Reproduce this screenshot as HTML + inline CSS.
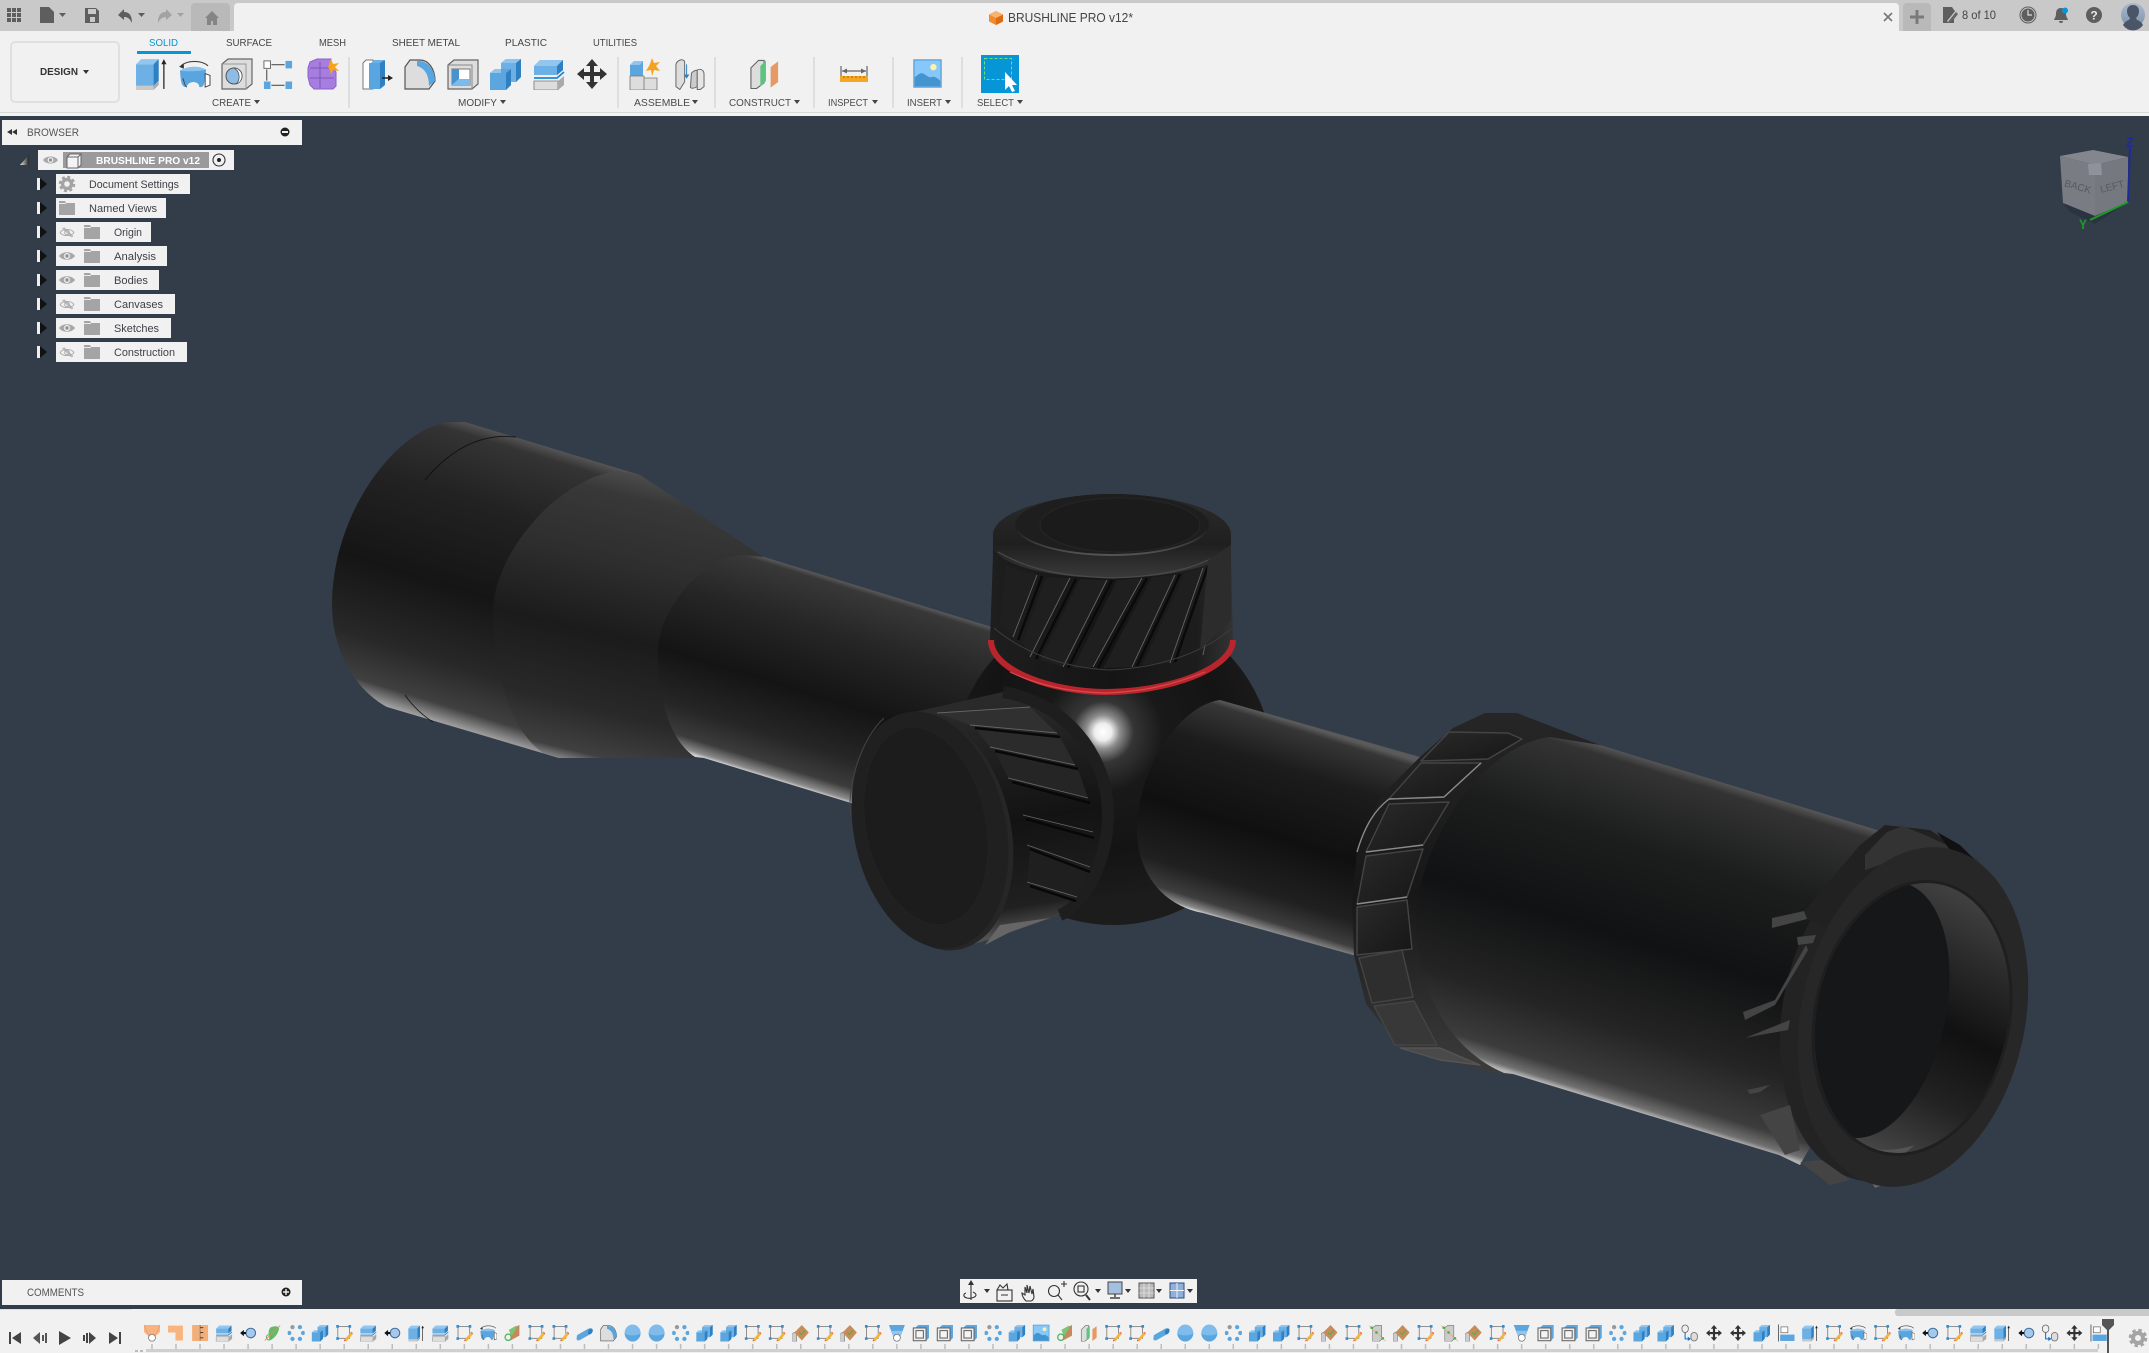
<!DOCTYPE html>
<html><head><meta charset="utf-8"><title>BRUSHLINE PRO v12</title>
<style>
html,body{margin:0;padding:0;background:#333d4a;width:2149px;height:1353px;overflow:hidden}
svg{display:block}
text{font-family:"Liberation Sans",sans-serif}
</style></head><body>
<svg xmlns="http://www.w3.org/2000/svg" width="2149" height="1353" viewBox="0 0 2149 1353">
<defs>
<linearGradient id="tA" gradientUnits="userSpaceOnUse" x1="800" y1="568" x2="738" y2="768.5">
<stop offset="0" stop-color="#5a5a5a"/><stop offset=".025" stop-color="#383838"/><stop offset=".25" stop-color="#262626"/><stop offset=".56" stop-color="#141414"/><stop offset=".8" stop-color="#262626"/><stop offset=".93" stop-color="#3c3c3c"/><stop offset=".985" stop-color="#8c8c8c"/><stop offset="1" stop-color="#cfcfcf"/></linearGradient>
<linearGradient id="tB" gradientUnits="userSpaceOnUse" x1="620" y1="470" x2="550" y2="760">
<stop offset="0" stop-color="#4c4c4c"/><stop offset=".08" stop-color="#383838"/><stop offset=".3" stop-color="#2e2e2e"/><stop offset=".55" stop-color="#1b1b1b"/><stop offset=".8" stop-color="#292929"/><stop offset=".95" stop-color="#404040"/><stop offset="1" stop-color="#a0a0a0"/></linearGradient>
<linearGradient id="tC" gradientUnits="userSpaceOnUse" x1="500" y1="432" x2="413" y2="714">
<stop offset="0" stop-color="#555"/><stop offset=".04" stop-color="#343434"/><stop offset=".25" stop-color="#222"/><stop offset=".55" stop-color="#151515"/><stop offset=".8" stop-color="#282828"/><stop offset=".94" stop-color="#404040"/><stop offset="1" stop-color="#a0a0a0"/></linearGradient>
<linearGradient id="tR" gradientUnits="userSpaceOnUse" x1="1300" y1="724.6" x2="1238" y2="924.6">
<stop offset="0" stop-color="#5a5a5a"/><stop offset=".03" stop-color="#363636"/><stop offset=".22" stop-color="#1c1c1c"/><stop offset=".55" stop-color="#101010"/><stop offset=".82" stop-color="#202020"/><stop offset=".94" stop-color="#3e3e3e"/><stop offset=".985" stop-color="#8a8a8a"/><stop offset="1" stop-color="#ddd"/></linearGradient>
<linearGradient id="tM" gradientUnits="userSpaceOnUse" x1="1700" y1="775" x2="1599" y2="1100">
<stop offset="0" stop-color="#585858"/><stop offset=".03" stop-color="#333"/><stop offset=".25" stop-color="#1c1d1d"/><stop offset=".52" stop-color="#111213"/><stop offset=".78" stop-color="#242424"/><stop offset=".94" stop-color="#3c3c3c"/><stop offset=".985" stop-color="#707070"/><stop offset="1" stop-color="#b4b4b4"/></linearGradient>
<linearGradient id="tI" gradientUnits="userSpaceOnUse" x1="1960" y1="880" x2="1890" y2="1150">
<stop offset="0" stop-color="#454545"/><stop offset=".25" stop-color="#2a2a2a"/><stop offset=".5" stop-color="#111"/><stop offset=".75" stop-color="#222"/><stop offset="1" stop-color="#444"/></linearGradient>
<radialGradient id="sph" gradientUnits="userSpaceOnUse" cx="1103" cy="732" r="170">
<stop offset="0" stop-color="#fff"/><stop offset=".05" stop-color="#eee"/><stop offset=".1" stop-color="#8c8c8c"/><stop offset=".18" stop-color="#353535"/><stop offset=".35" stop-color="#191919"/><stop offset=".7" stop-color="#141414"/><stop offset="1" stop-color="#1c1c1c"/></radialGradient>
<linearGradient id="kn" x1="0" y1="0" x2="1" y2="0"><stop offset="0" stop-color="#1e1e1e"/><stop offset=".5" stop-color="#151515"/><stop offset=".85" stop-color="#1d1d1d"/><stop offset="1" stop-color="#333"/></linearGradient>
<linearGradient id="capT" x1="0" y1="0" x2="0" y2="1"><stop offset="0" stop-color="#2c2c2c"/><stop offset=".6" stop-color="#1f1f1f"/><stop offset="1" stop-color="#3a3a3a"/></linearGradient>
<linearGradient id="capI" x1="0" y1="0" x2="0" y2="1"><stop offset="0" stop-color="#232323"/><stop offset=".55" stop-color="#1d1d1d"/><stop offset="1" stop-color="#555"/></linearGradient>
<linearGradient id="wnd" gradientUnits="userSpaceOnUse" x1="1000" y1="700" x2="1040" y2="940"><stop offset="0" stop-color="#2a2a2a"/><stop offset=".5" stop-color="#131313"/><stop offset=".85" stop-color="#202020"/><stop offset="1" stop-color="#666"/></linearGradient>
<linearGradient id="ring" x1="0" y1="0" x2="0" y2="1"><stop offset="0" stop-color="#262626"/><stop offset=".5" stop-color="#171717"/><stop offset="1" stop-color="#3c3c3c"/></linearGradient>
<linearGradient id="cell" x1="0" y1="0" x2="1" y2="1"><stop offset="0" stop-color="#2a2a2a"/><stop offset="1" stop-color="#161616"/></linearGradient>
<linearGradient id="tri" x1="0" y1="0" x2="1" y2="0"><stop offset="0" stop-color="#eee"/><stop offset="1" stop-color="#222"/></linearGradient>
<linearGradient id="avt" x1="0" y1="0" x2="0" y2="1"><stop offset="0" stop-color="#aab8cc"/><stop offset="1" stop-color="#7f93ad"/></linearGradient>
<clipPath id="inClip"><ellipse cx="1912" cy="1018" rx="95" ry="137" transform="rotate(12 1912 1018)"/></clipPath>

<symbol id="E" viewBox="0 0 32 32"><path d="M1 7h17v21H1z" fill="#6cb0e6"/><path d="M1 7l5-5h17l-5 5z" fill="#92c6ef"/><path d="M18 7l5-5v21l-5 5z" fill="#2f80c2"/><path d="M1 28h17v4H1z" fill="#c9c9c9"/><path d="M18 28l5-5v4l-5 5z" fill="#aaa"/><path d="M28 31V6" stroke="#222" stroke-width="1.2"/><path d="M25.5 7L28 2l2.500 5z" fill="#222"/></symbol>
<symbol id="R" viewBox="0 0 32 32"><path d="M2 7C9 1 23 1 30 7" fill="none" stroke="#444" stroke-width="1.200"/><path d="M0 8l5-3 0 5z" fill="#333"/><path d="M1 12C9 7 21 7 28 11L27 18C26 28 25 29 21 29C21 22 9 22 8 29C3 29 2 26 1 12Z" fill="#59a5df"/><path d="M1 12C9 7 21 7 28 11C21 13 9 13 1 12Z" fill="#8ac2ee"/><path d="M4 20c2 5 2 8 4 9M27 15l5 2v10l-5 2z" fill="#fff" stroke="#444"/></symbol>
<symbol id="H1" viewBox="0 0 32 32"><path d="M1 6l6-5h24v25l-6 5H1z" fill="#ddd" stroke="#666" stroke-width="1.200"/><path d="M1 6h24v25" fill="none" stroke="#999"/><circle cx="13" cy="18" r="8" fill="#8dbde6" stroke="#555"/><path d="M13 10a8 8 0 0 1 8 8a8 8 0 0 1-6 8a10 10 0 0 0-2-16z" fill="#fff" stroke="#555" stroke-width=".8"/></symbol>
<symbol id="SP" viewBox="0 0 32 32"><rect x="1" y="2" width="7" height="8" fill="#fff" stroke="#666"/><path d="M24 2h7v8h-7zM1 24h7v8H1zM24 24h7v8h-7z" fill="#5ba6df"/><path d="M9 6h14M4 11v12M9 28h14" stroke="#555" stroke-width="1.200"/></symbol>
<symbol id="FORM" viewBox="0 0 32 32"><path d="M3 4L10 1h14v6l5 7v14l-3 3H7l-4-4-2-8V10z" fill="#a77ee0" stroke="#8a5fcf"/><path d="M3 10h22M13 4v26M3 20h24" stroke="#7d56bb" fill="none"/><path d="M21 9l3-8 2 5 6-1-4 4 4 4-6-1-2 5-1-5z" fill="#f6a21c"/></symbol>
<symbol id="PP" viewBox="0 0 32 32"><path d="M1 5l3-3h7v29H1z" fill="#fff" stroke="#777"/><path d="M9 5l3-3h10v23H9z" fill="#6cb0e6"/><path d="M7 31V5h11l0 26z" fill="#59a5df"/><path d="M18 5l5-3v25l-5 4z" fill="#2f80c2"/><path d="M20 20h8" stroke="#222" stroke-width="1.500"/><path d="M26 17l5 3-5 3z" fill="#222"/></symbol>
<symbol id="F" viewBox="0 0 32 32"><path d="M1 31V9L6 2h10c8 0 15 8 15 21l-6 8z" fill="#ddd" stroke="#555" stroke-width="1.200"/><path d="M13 3c8-1 18 6 18 20l-6 5C25 16 20 10 13 8z" fill="#59a5df"/></symbol>
<symbol id="CH" viewBox="0 0 32 32"><path d="M1 7l6-5h24v24l-6 5H1z" fill="#ddd" stroke="#666" stroke-width="1.200"/><path d="M1 7h24v24" fill="none" stroke="#888"/><path d="M5 11h18v16H5z" fill="#fff" stroke="#777"/><path d="M5 11h7v10l-7 6z" fill="#4a92cc"/><path d="M5 27l7-6h11v6z" fill="#7bbbec"/></symbol>
<symbol id="C" viewBox="0 0 32 32"><path d="M11 5l5-4h15v18l-5 5H11z" fill="#6cb0e6"/><path d="M11 5l5-4h15l-5 4z" fill="#8fc5ef"/><path d="M26 5l5-4v18l-5 5z" fill="#2f80c2"/><path d="M0 15l5-4h16v16l-5 5H0z" fill="#5ba6df"/><path d="M0 15l5-4h6v4z" fill="#8fc5ef"/><path d="M16 15l5-4v16l-5 5z" fill="#2f80c2"/></symbol>
<symbol id="P" viewBox="0 0 32 32"><path d="M1 8l6-6h23v10l-6 5H1z" fill="#6cb0e6"/><path d="M1 8l6-6h23l-6 6z" fill="#92c6ef"/><path d="M24 8l6-6v10l-6 5z" fill="#2f80c2"/><path d="M1 20h23l7-6" fill="none" stroke="#1e88d8" stroke-width="1.800"/><path d="M1 23h24v9H1z" fill="#ddd" stroke="#777" stroke-width=".8"/><path d="M25 23l6-5v9l-6 5z" fill="#aaa"/></symbol>
<symbol id="M" viewBox="0 0 32 32"><path d="M16 1l6 7h-4v6h6v-4l7 6-7 6v-4h-6v6h4l-6 7-6-7h4v-6H8v4l-7-6 7-6v4h6V8h-4z" fill="#333"/></symbol>
<symbol id="ASM" viewBox="0 0 32 32"><path d="M1 7l4-4h9v15H1z" fill="#5ba6df"/><path d="M1 7l4-4h9l-3 4z" fill="#8fc5ef"/><path d="M1 18h14v14H1zM15 20h13v12H15z" fill="#ddd" stroke="#777" stroke-width=".8"/><path d="M21 6l2-6 2 5 6-1-4 4 4 5-6-1-2 6-1-6-5 1 3-5z" fill="#f6a21c"/></symbol>
<symbol id="JT" viewBox="0 0 32 32"><path d="M2 29V7c0-4 5-7 8-5l1 1v21l-5 8z" fill="#ddd" stroke="#666"/><path d="M18 15c2-2 4-3 6-3v17c-3 2-6 2-7 1z" fill="#ccc" stroke="#666"/><path d="M24 12c3-2 7 0 7 4v13l-4 3h-3z" fill="#e5e5e5" stroke="#666"/><path d="M13 6v14M13 20l-2-3h4z" stroke="#2f80c2" fill="#2f80c2"/></symbol>
<symbol id="N" viewBox="0 0 32 32"><path d="M1 10L9 2h6v24l-8 6H1z" fill="#ddd" stroke="#666" stroke-width="1.200"/><path d="M11 8l6-6v22l-6 6z" fill="#5ec282"/><path d="M22 9l8-6v22l-8 6z" fill="#e59a66"/></symbol>
<symbol id="K" viewBox="0 0 32 32"><path d="M12 9l17-8v20l-17 9z" fill="#c68a5a"/><path d="M9 10l14-8v6l-9 14z" fill="#7cc47a"/><circle cx="8" cy="24" r="6" fill="none" stroke="#57b665" stroke-width="2.500"/></symbol>
<symbol id="INS" viewBox="0 0 32 32"><rect x="1" y="1" width="30" height="30" fill="#86c8fa" stroke="#4d93cd" stroke-width="1.200"/><circle cx="22.500" cy="9" r="3.500" fill="#fff2a8"/><path d="M2 30V20c4-3 6-5 9-4s6 5 9 4 6 0 10 4v6z" fill="#4495cf"/></symbol>
<symbol id="S" viewBox="0 0 32 32"><rect x="4" y="4" width="22" height="22" fill="none" stroke="#777" stroke-width="1.500"/><path d="M1 1h5v5H1zM24 1h5v5h-5zM1 24h5v5H1z" fill="#2d8fd8"/><path d="M16 29l12-14 4 3-12 14z" fill="#f3b43b"/><path d="M16 32l0-4 3 2z" fill="#f04040"/><path d="M28 15l4 3 0-2-3-2z" fill="#e33"/></symbol>
<symbol id="J" viewBox="0 0 32 32"><circle cx="21" cy="16" r="9" fill="#a8c8e8" stroke="#3b6ea5" stroke-width="2"/><path d="M12 16H6" stroke="#111" stroke-width="4"/><path d="M1 16l7-6v12z" fill="#111"/></symbol>
<symbol id="G" viewBox="0 0 32 32"><path d="M12 6C22 1 28 4 29 7 28 16 20 28 10 30 12 22 6 16 12 6z" fill="#62ba6c"/><circle cx="10" cy="24" r="5" fill="none" stroke="#5cb565" stroke-width="2"/><path d="M2 30L31 2" stroke="#ea8a55" stroke-width="1.500"/></symbol>
<symbol id="D" viewBox="0 0 32 32"><circle cx="9" cy="5" r="4" fill="#999"/><circle cx="23" cy="5" r="4" fill="#5ba6df"/><circle cx="3" cy="16" r="4" fill="#5ba6df"/><circle cx="29" cy="16" r="4" fill="#5ba6df"/><circle cx="9" cy="27" r="4" fill="#5ba6df"/><circle cx="23" cy="27" r="4" fill="#5ba6df"/></symbol>
<symbol id="Y" viewBox="0 0 32 32"><path d="M2 20L23 8c4-2 7-1 8 2 1 3-1 6-4 8L8 29c-4 2-7 1-7-3z" fill="#5ba6df"/><ellipse cx="27" cy="13" rx="4" ry="6" fill="#2f80c2" transform="rotate(30 27 13)"/></symbol>
<symbol id="B" viewBox="0 0 32 32"><ellipse cx="16" cy="16" rx="15" ry="16" fill="#7fbcec"/><path d="M1 16c4 6 26 6 30 0a15 16 0 0 1-30 0z" fill="#5ba6df"/></symbol>
<symbol id="V" viewBox="0 0 32 32"><path d="M0 32V17l8-4v19z" fill="#ccc" stroke="#666"/><path d="M4 15L18 1l13 14-13 15z" fill="#c88c5a"/><path d="M13 15l4 4 7-8" fill="none" stroke="#4bb14b" stroke-width="2"/></symbol>
<symbol id="L" viewBox="0 0 32 32"><path d="M1 1h30l-8 21H9z" fill="#5ba6df"/><path d="M9 22l-3-10 20 0-3 10z" fill="#8fc5ef"/><circle cx="16" cy="25" r="6.500" fill="#fff" stroke="#666" stroke-width="1.300"/></symbol>
<symbol id="HS" viewBox="0 0 32 32"><path d="M6 5l5-4h20v24l-5 5z" fill="#5ba6df"/><rect x="1.500" y="6.500" width="24" height="24" fill="#eee" stroke="#666" stroke-width="2"/><rect x="6.500" y="11.500" width="14" height="14" fill="#f4f4f4" stroke="#666" stroke-width="2"/></symbol>
<symbol id="T" viewBox="0 0 32 32"><path d="M7 6l5-4h12v26l-5 4H7z" fill="#ccc" stroke="#666"/><path d="M0 2L32 32" stroke="#e2a070"/><circle cx="5" cy="6" r="2.500" fill="#4bb14b"/><circle cx="26" cy="26" r="2.500" fill="#4bb14b"/><circle cx="14" cy="15" r="2.500" fill="#4bb14b"/></symbol>
<symbol id="W" viewBox="0 0 32 32"><rect x="1" y="1" width="12" height="14" rx="6" fill="#eee" stroke="#666" stroke-width="1.500"/><rect x="18" y="15" width="12" height="16" rx="6" fill="#ddd" stroke="#666" stroke-width="1.500"/><path d="M7 15v12h7" fill="none" stroke="#1670c0" stroke-width="2"/><path d="M12 23l6 4-6 4z" fill="#1670c0"/></symbol>
<symbol id="A" viewBox="0 0 32 32"><path d="M2 0v32" stroke="#444" stroke-width="1.500"/><rect x="6.500" y="4.500" width="13" height="11" fill="#fff" stroke="#666" stroke-width="1.300"/><rect x="5" y="19" width="27" height="12" fill="#5ba6df"/></symbol>
<symbol id="O1" viewBox="0 0 32 32"><path d="M1 1h30v13l-9 8H10L1 14z" fill="#f6b281"/><path d="M1 1l9 21M31 1l-9 21" stroke="#e8955a"/><circle cx="16" cy="25" r="6.500" fill="#fff" stroke="#666" stroke-width="1.300"/></symbol>
<symbol id="O2" viewBox="0 0 32 32"><path d="M1 2h28v28H15V15H1z" fill="#f9b47e"/></symbol>
<symbol id="O3" viewBox="0 0 32 32"><rect x="1" y="1" width="30" height="30" fill="#f4ae78"/><path d="M16 1v30" stroke="#555" stroke-dasharray="2 1" stroke-width="1.400"/><path d="M16 6h6M16 15h6M16 25h6" stroke="#333" stroke-width="1.600"/></symbol>
<symbol id="eye" viewBox="0 0 16 10"><path d="M0 5C3 0 13 0 16 5 13 10 3 10 0 5z" fill="#a8a8a8"/><circle cx="8" cy="5" r="3" fill="#f1f1f1"/><circle cx="8" cy="5" r="1.700" fill="#909090"/></symbol>
<symbol id="eyeoff" viewBox="0 0 16 12"><path d="M.5 6C3 1.500 13 1.500 15.500 6 13 10.500 3 10.500 .5 6z" fill="none" stroke="#aaa"/><circle cx="8" cy="6" r="2.500" fill="none" stroke="#aaa"/><path d="M3 1l10 10M4.500.5l10 10" stroke="#aaa"/></symbol>
<symbol id="fld" viewBox="0 0 16 14"><path d="M0 0h6l1 2h9v12H0z" fill="#a4a4a4"/><path d="M0 2h7v1H0z" fill="#e8e8e8"/></symbol>
<symbol id="arw" viewBox="0 0 10 12"><rect x="0" y="0" width="3" height="12" fill="#eee"/><path d="M3 0l7 6-7 6z" fill="#111"/></symbol>
</defs>

<!-- frame -->
<rect width="2149" height="1353" fill="#333d4a"/>
<rect width="2149" height="31" fill="#c9c9c9"/>
<rect y="31" width="2149" height="81" fill="#f1f1f1"/>
<rect y="112" width="2149" height="1" fill="#d8d8d8"/>
<rect y="113" width="2149" height="3" fill="#f3f3f3"/>
<path d="M234 31V7a4 4 0 0 1 4-4H1895a4 4 0 0 1 4 4V31z" fill="#f1f1f1"/>
<path d="M191 31V7a4 4 0 0 1 4-4h31a4 4 0 0 1 4 4V31z" fill="#b9b9b9"/>
<path d="M1903 31V7a4 4 0 0 1 4-4h20a4 4 0 0 1 4 4V31z" fill="#b9b9b9"/>

<!-- quick access -->
<g fill="#5e5e5e">
<path d="M7 8h4v4H7zM12 8h4v4h-4zM17 8h4v4h-4zM7 13h4v4H7zM12 13h4v4h-4zM17 13h4v4h-4zM7 18h4v4H7zM12 18h4v4h-4zM17 18h4v4h-4z"/>
<path d="M40 7h9l5 5v11H40z"/><path d="M59 13h7l-3.500 4z"/>
<path d="M85 8h11l3 3v12H85zM88 9v5h8V9zM90 17v5h5v-5z" fill-rule="evenodd"/>
<path d="M118 15l6-6v3c5 0 8 3 8 11-2-4-4-6-8-6v3z"/><path d="M138 13h7l-3.500 4z"/>
</g>
<g fill="#a2a2a2"><path d="M172 15l-6-6v3c-5 0-8 3-8 11 2-4 4-6 8-6v3z"/><path d="M177 13h7l-3.500 4z"/></g>
<path d="M212 19l7-7 7 7h-2v7h-4v-4h-2v4h-4v-7z" fill="#858585" transform="translate(-7 -1)"/>

<!-- title -->
<path d="M996 11l7 3.500v7L996 25l-7-3.500v-7z" fill="#f28a2e"/><path d="M996 18l7-3.500v7L996 25z" fill="#e06a10"/><path d="M996 11l7 3.500-7 3.500-7-3.500z" fill="#f9b26f"/>
<text x="1008" y="22" font-size="13" fill="#444" textLength="125" lengthAdjust="spacingAndGlyphs">BRUSHLINE PRO v12*</text>
<path d="M1884 13l8 8M1892 13l-8 8" stroke="#777" stroke-width="1.600"/>
<path d="M1917 10v14M1910 17h14" stroke="#7a7a7a" stroke-width="3"/>
<path d="M1943 7h9l2 3 4 4-4 5v4h-11z" fill="#5e5e5e"/><path d="M1947 21l9-11 2 2-9 11z" fill="#c9c9c9"/><path d="M1948 22l8-10 1 1-8 10z" fill="#5e5e5e"/>
<text x="1962" y="19" font-size="12" fill="#444" textLength="34" lengthAdjust="spacingAndGlyphs">8 of 10</text>
<circle cx="2028" cy="15" r="8" fill="none" stroke="#5e5e5e"/><circle cx="2028" cy="15" r="6.500" fill="#5e5e5e"/><path d="M2028 10v5h4" fill="none" stroke="#ddd" stroke-width="1.200"/>
<path d="M2061 8c4 0 5 3 5 6 0 3 2 5 2 6h-14c0-1 2-3 2-6 0-3 1-6 5-6z" fill="#5e5e5e"/><path d="M2059 21h4a2 2 0 0 1-4 0z" fill="#5e5e5e"/><circle cx="2065" cy="10.500" r="3" fill="#0696d7"/>
<circle cx="2094" cy="15" r="8" fill="#5e5e5e"/><text x="2094" y="19.500" font-size="12" font-weight="bold" fill="#e8e8e8" text-anchor="middle">?</text>
<circle cx="2133" cy="15" r="12" fill="url(#avt)"/><path d="M2133 5c4 0 6 3 6 6 0 3-1 5-3 7l1 2c3 1 5 3 6 5a12 12 0 0 1-20 0c1-2 3-4 6-5l1-2c-2-2-3-4-3-7 0-3 2-6 6-6z" fill="#4a5568"/>

<!-- ribbon tabs -->
<g font-size="10.500" fill="#444">
<text x="149" y="46" fill="#0696d7" textLength="29" lengthAdjust="spacingAndGlyphs">SOLID</text>
<text x="226" y="46" textLength="46" lengthAdjust="spacingAndGlyphs">SURFACE</text>
<text x="319" y="46" textLength="27" lengthAdjust="spacingAndGlyphs">MESH</text>
<text x="392" y="46" textLength="68" lengthAdjust="spacingAndGlyphs">SHEET METAL</text>
<text x="505" y="46" textLength="42" lengthAdjust="spacingAndGlyphs">PLASTIC</text>
<text x="593" y="46" textLength="44" lengthAdjust="spacingAndGlyphs">UTILITIES</text>
</g>
<rect x="137" y="51" width="54" height="3" fill="#0696d7"/>
<rect x="11" y="42" width="108" height="60" rx="4" fill="#f1f1f1" stroke="#e0e0e0" stroke-width="2"/>
<text x="40" y="75" font-size="10.500" font-weight="bold" fill="#333" textLength="38" lengthAdjust="spacingAndGlyphs">DESIGN</text>
<path d="M83 70h6l-3 4z" fill="#333"/>

<!-- ribbon icons -->
<use href="#E" x="135" y="57" width="33" height="33"/>
<use href="#R" x="178" y="59" width="33" height="31"/>
<use href="#H1" x="221" y="58" width="32" height="32"/>
<use href="#SP" x="263" y="59" width="30" height="30"/>
<use href="#FORM" x="307" y="58" width="32" height="32"/>
<use href="#PP" x="362" y="58" width="32" height="32"/>
<use href="#F" x="404" y="58" width="32" height="32"/>
<use href="#CH" x="447" y="58" width="32" height="32"/>
<use href="#C" x="490" y="58" width="32" height="32"/>
<use href="#P" x="533" y="58" width="32" height="32"/>
<use href="#M" x="576" y="58" width="32" height="32"/>
<use href="#ASM" x="629" y="58" width="32" height="32"/>
<use href="#JT" x="674" y="58" width="31" height="32"/>
<use href="#N" x="750" y="58" width="30" height="31"/>
<path d="M841 66v11M867 66v11M842 71h24" stroke="#666" stroke-width="1.200" fill="none"/><path d="M842 71l5-2.500v5zM866 71l-5-2.500v5z" fill="#666"/>
<rect x="840" y="76" width="28" height="6" fill="#f5a623"/><path d="M844 76v2M848 76v2M852 76v2M856 76v2M860 76v2M864 76v2" stroke="#a86a00"/>
<use href="#INS" x="913" y="59" width="29" height="29"/>
<rect x="981" y="55" width="38" height="38" fill="#0696d7"/>
<rect x="984.500" y="58.500" width="27" height="21" fill="none" stroke="#6fe07a" stroke-dasharray="3 2"/>
<path d="M1005 72v18l4-4 3 6 3-1-3-6h5z" fill="#fff"/>

<!-- separators -->
<g fill="#dedede"><rect x="348" y="57" width="2" height="51"/><rect x="617" y="57" width="2" height="51"/><rect x="714" y="57" width="2" height="51"/><rect x="813" y="57" width="2" height="51"/><rect x="892" y="57" width="2" height="51"/><rect x="961" y="57" width="2" height="51"/></g>
<g font-size="10.500" fill="#4a4a4a">
<text x="212" y="106" textLength="39" lengthAdjust="spacingAndGlyphs">CREATE</text>
<text x="458" y="106" textLength="39" lengthAdjust="spacingAndGlyphs">MODIFY</text>
<text x="634" y="106" textLength="56" lengthAdjust="spacingAndGlyphs">ASSEMBLE</text>
<text x="729" y="106" textLength="62" lengthAdjust="spacingAndGlyphs">CONSTRUCT</text>
<text x="828" y="106" textLength="40" lengthAdjust="spacingAndGlyphs">INSPECT</text>
<text x="907" y="106" textLength="35" lengthAdjust="spacingAndGlyphs">INSERT</text>
<text x="977" y="106" textLength="37" lengthAdjust="spacingAndGlyphs">SELECT</text>
</g>
<path d="M254 100h6l-3 4zM500 100h6l-3 4zM692 100h6l-3 4zM794 100h6l-3 4zM872 100h6l-3 4zM945 100h6l-3 4zM1017 100h6l-3 4z" fill="#444"/>

<!-- SCOPE -->
<!-- rear objective -->
<path d="M451 422H465L640 475L800 700L704 758L559 758L387 707C355 690 332 650 332 605C332 510 400 425 451 422Z" fill="url(#tC)"/>
<path d="M516 437C480 433 450 450 425 480M405 695C412 705 422 715 433 722" fill="none" stroke="#0d0d0d" stroke-width="1" opacity=".8"/>
<path d="M617 471L640 475L655 485L764 557L800 700L704 758L559 758L543 753C510 730 493 670 493 613C493 555 555 480 617 471Z" fill="url(#tB)"/>
<path d="M741 555L764 557L1050 645L1000 849L851 803L704 758L695 757C670 740 658 700 658 653C658 610 700 560 741 555Z" fill="url(#tA)"/>
<!-- sphere -->
<circle cx="1113" cy="765" r="160" fill="url(#sph)"/>
<!-- right tube -->
<path d="M1220 700C1180 705 1137 770 1137 830C1137 870 1160 905 1203 913L1360 957L1420 757Z" fill="url(#tR)"/>
<!-- elevation knob -->
<path d="M993 540C993 510 1060 494 1112 494C1170 494 1231 510 1231 535L1231 555L1233 640C1233 670 1170 690 1110 690C1050 690 990 670 990 640L993 555Z" fill="url(#kn)"/>
<path d="M993 535C993 510 1060 494 1112 494C1170 494 1231 510 1231 535V548C1225 565 1170 578 1112 578C1050 578 1000 565 993 548Z" fill="url(#capT)"/>
<ellipse cx="1112" cy="525" rx="97" ry="31" fill="url(#capI)"/>
<ellipse cx="1112" cy="524" rx="96" ry="30" fill="#1e1e1e"/>
<ellipse cx="1120" cy="525" rx="80" ry="27" fill="#1b1b1b" stroke="#262626"/>
<path d="M998 552C1030 570 1060 576 1112 578C1170 576 1205 566 1228 548" fill="none" stroke="#4a4a4a" stroke-width="1.200"/>
<g fill="#1f1f1f">
<path d="M1006 566L1037 575L1013 637L1000 625Z"/><path d="M1046 577L1070 578L1030 657L1022 642Z"/><path d="M1080 579L1107 580L1063 667L1040 660Z"/><path d="M1117 580L1142 578L1093 667L1073 668Z"/><path d="M1152 577L1175 575L1132 667L1103 668Z"/><path d="M1185 573L1203 568L1170 663L1142 665Z"/>
</g>
<g fill="none" stroke="#666" stroke-width=".9">
<path d="M1037 575L1013 637M1070 578L1030 657M1107 580L1063 667M1142 578L1093 667M1175 575L1132 667M1203 568L1170 663M1223 558L1203 655"/>
</g>
<g fill="none" stroke="#0a0a0a" stroke-width="2.500">
<path d="M1042 576L1018 640M1076 579L1036 659M1112 580L1068 668M1147 578L1098 668M1180 574L1137 666M1208 566L1175 662"/>
</g>
<path d="M994 628C1020 650 1060 668 1110 670C1160 668 1205 652 1232 628" fill="none" stroke="#3c3c3c" stroke-width="1"/>
<path d="M1208 560L1231 545V620L1200 650Z" fill="#2c2c2c"/>
<!-- red ring -->
<path d="M991 640C991 672 1056 692 1105 692C1170 692 1233 668 1233 640" fill="none" stroke="#b8252c" stroke-width="6"/>
<path d="M1010 672C1040 686 1070 692 1105 693C1140 692 1170 686 1205 672" fill="none" stroke="#d94a4e" stroke-width="1.200"/>
<!-- windage knob -->
<path d="M910 713L1003 692C1065 702 1108 755 1108 815C1108 860 1085 905 1060 915L997 937L960 948Z" fill="url(#wnd)"/>
<g fill="#2b2b2b">
<path d="M937 713L1030 707L1057 733L970 725Z" fill="#303030"/><path d="M975 728L1060 737L1075 765L990 747Z"/><path d="M995 751L1078 769L1088 798L1008 778Z" fill="#252525"/><path d="M1030 849L1090 872L1077 897L1027 882Z" fill="#1f1f1f"/>
</g>
<path d="M1003 692C1065 702 1108 755 1108 815C1108 860 1085 905 1060 915" fill="none" stroke="#1e1e1e" stroke-width="12"/>
<g fill="none" stroke="#666" stroke-width=".9">
<path d="M937 713L1030 707M970 725L1057 733M990 747L1075 765M1008 778L1088 798M1023 815L1093 832M1027 845L1090 867M1027 882L1077 897"/>
</g>
<g fill="none" stroke="#080808" stroke-width="2.500">
<path d="M975 728L1060 737M995 751L1078 769M1012 782L1090 803M1026 819L1094 838M1030 849L1090 872M1030 886L1076 901"/>
</g>
<path d="M1000 925L1050 918L1010 932L985 945Z" fill="#666"/>
<ellipse cx="935" cy="832" rx="76" ry="120" fill="#262626" transform="rotate(-12 935 832)"/>
<ellipse cx="930" cy="830" rx="76" ry="120" fill="#202020" transform="rotate(-12 930 830)"/>
<ellipse cx="926" cy="826" rx="60" ry="100" fill="#1c1c1c" stroke="#222" transform="rotate(-12 926 826)"/>
<path d="M884 718C860 740 846 790 851 815" fill="none" stroke="#444" stroke-width="1"/>
<!-- right knurl ring -->
<path d="M1485 713L1517 713L1600 745L1550 1000L1499 1074L1449 1062L1398 1045L1366 1004L1354 955L1352 904L1357 852L1380 797L1421 756L1453 728Z" fill="url(#ring)"/>
<g fill="url(#cell)" stroke="#444" stroke-width="1.400" stroke-linejoin="round">
<path d="M1449 732L1508 733L1522 739L1488 759L1421 761Z"/>
<path d="M1421 763L1481 763L1444 797L1389 799Z"/>
<path d="M1389 804L1449 802L1423 845L1366 852Z"/>
<path d="M1366 856L1423 849L1407 897L1357 904Z"/>
<path d="M1357 907L1407 900L1412 949L1357 955Z"/>
<path d="M1359 958L1402 950L1413 997L1372 1003Z" fill="#2e2e2e"/>
<path d="M1374 1006L1414 1001L1437 1045L1395 1045Z" fill="#383838"/>
<path d="M1400 1048L1440 1048L1480 1065L1440 1060Z" fill="#4a4a4a" stroke="#555"/>
</g>
<path d="M1389 799L1444 797M1366 852L1423 845M1357 904L1407 897M1357 852C1365 825 1375 810 1389 799M1444 797L1481 763" fill="none" stroke="#8a8a8a" stroke-width="1.400"/>
<!-- main body -->
<path d="M1550 737L1600 745L1890 834L1950 900L1800 1165L1779 1155L1513 1074L1504 1073C1450 1050 1416 990 1416 921C1416 850 1480 745 1550 737Z" fill="url(#tM)"/>
<!-- eyepiece collar -->
<ellipse cx="1895" cy="1012" rx="112" ry="172" fill="#232323" transform="rotate(12 1895 1012)"/>
<path d="M1800 916L1860 845L1885 825L1930 830L1975 860L1960 870L1900 860L1830 930Z" fill="#212121"/>
<path d="M1887 832L1903 826L1925 835L1977 859L1985 870L1950 855L1925 850L1865 870L1865 855Z" fill="#333"/>
<path d="M1772 918L1804 911L1807 919L1772 928ZM1797 937L1816 935L1813 943L1798 945ZM1806 945L1775 1000L1743 1012L1745 1020L1775 1005L1808 950ZM1790 1020L1745 1038L1760 1035L1788 1030ZM1747 1090L1770 1085L1760 1092L1750 1094ZM1760 1115L1790 1105L1800 1150L1785 1155Z" fill="#444"/>
<path d="M1800 1162L1822 1160L1850 1180L1830 1185Z" fill="#444"/><path d="M1870 1180L1885 1184L1875 1188Z" fill="#666"/>
<path d="M1937 832L1960 845L1975 860L1950 850Z" fill="#111"/>
<!-- eyepiece face -->
<ellipse cx="1913" cy="1017" rx="112" ry="172" fill="#272727" transform="rotate(12 1913 1017)"/>
<ellipse cx="1912" cy="1018" rx="97" ry="138" fill="url(#tI)" transform="rotate(12 1912 1018)"/>
<g clip-path="url(#inClip)">
<ellipse cx="1876" cy="1010" rx="70" ry="130" fill="#161718" transform="rotate(12 1876 1010)"/>
<path d="M1850 1138C1870 1155 1900 1150 1915 1145L1890 1165L1850 1150Z" fill="#555"/>
</g>
<ellipse cx="1912" cy="1018" rx="97" ry="138" fill="none" stroke="#1f1f1f" stroke-width="3" transform="rotate(12 1912 1018)"/>

<!-- viewcube -->
<path d="M2060 156L2093 150L2128 157L2095 165Z" fill="#83878d"/>
<path d="M2060 156L2095 165V216L2063 203Z" fill="#797d83"/>
<path d="M2095 165L2128 157V202L2095 216Z" fill="#75797f"/>
<path d="M2088 164L2101 163L2102 175L2089 175Z" fill="#8e939b"/>
<path d="M2063 203L2095 216L2128 202L2095 224L2070 212Z" fill="#222a34" opacity=".5"/>
<text x="2078" y="190" font-size="10" fill="#565a60" text-anchor="middle" transform="rotate(16 2078 186)">BACK</text>
<text x="2112" y="190" font-size="10" fill="#565a60" text-anchor="middle" transform="rotate(-14 2112 186)">LEFT</text>
<path d="M2130 148L2128 202" stroke="#1d2b9a" stroke-width="2"/>
<path d="M2128 202L2090 220" stroke="#1c9a2a" stroke-width="2"/>
<text x="2130" y="147" font-size="14" font-weight="bold" fill="#1d2b9a" text-anchor="middle" textLength="8" lengthAdjust="spacingAndGlyphs">Z</text>
<text x="2083" y="229" font-size="14" font-weight="bold" fill="#1c9a2a" text-anchor="middle" textLength="8" lengthAdjust="spacingAndGlyphs">Y</text>

<!-- browser -->
<rect x="2" y="120" width="300" height="25" fill="#f1f1f1"/>
<path d="M7 132l5-3v6zM12 132l5-3v6z" fill="#333"/>
<text x="27" y="136" font-size="11" fill="#555" textLength="52" lengthAdjust="spacingAndGlyphs">BROWSER</text>
<circle cx="285" cy="132" r="4.500" fill="#222"/><rect x="282" y="131" width="6" height="2" fill="#eee"/>
<path d="M20 165L29 155V165Z" fill="url(#tri)"/>
<rect x="38" y="150" width="196" height="20" fill="#f1f1f1"/>
<use href="#eye" x="43" y="155" width="15" height="10"/>
<rect x="63" y="152" width="146" height="16" fill="#9a9a9a"/>
<path d="M67 157l3-3h11v11l-3 3H67z" fill="#f4f4f4" stroke="#666"/><path d="M67 157h11v11M78 157l3-3" fill="none" stroke="#666"/>
<text x="96" y="164" font-size="10.500" font-weight="bold" fill="#fff" textLength="104" lengthAdjust="spacingAndGlyphs">BRUSHLINE PRO v12</text>
<circle cx="219" cy="160" r="6" fill="#f1f1f1" stroke="#333" stroke-width="1.100"/><circle cx="219" cy="160" r="2" fill="#222"/>
<g fill="#f1f1f1">
<rect x="56" y="174" width="134" height="20"/><rect x="56" y="198" width="110" height="20"/><rect x="56" y="222" width="95" height="20"/><rect x="56" y="246" width="111" height="20"/><rect x="56" y="270" width="103" height="20"/><rect x="56" y="294" width="119" height="20"/><rect x="56" y="318" width="115" height="20"/><rect x="56" y="342" width="131" height="20"/>
</g>
<use href="#arw" x="37" y="178" width="10" height="12"/><use href="#arw" x="37" y="202" width="10" height="12"/><use href="#arw" x="37" y="226" width="10" height="12"/><use href="#arw" x="37" y="250" width="10" height="12"/><use href="#arw" x="37" y="274" width="10" height="12"/><use href="#arw" x="37" y="298" width="10" height="12"/><use href="#arw" x="37" y="322" width="10" height="12"/><use href="#arw" x="37" y="346" width="10" height="12"/>
<circle cx="67" cy="184" r="4.500" fill="none" stroke="#a4a4a4" stroke-width="3.500"/><circle cx="67" cy="184" r="7" fill="none" stroke="#a4a4a4" stroke-width="2.500" stroke-dasharray="3 2.500"/>
<use href="#fld" x="59" y="201" width="16" height="14"/>
<use href="#eyeoff" x="59" y="227" width="16" height="11"/><use href="#fld" x="84" y="225" width="16" height="14"/>
<use href="#eye" x="59" y="251" width="16" height="10"/><use href="#fld" x="84" y="249" width="16" height="14"/>
<use href="#eye" x="59" y="275" width="16" height="10"/><use href="#fld" x="84" y="273" width="16" height="14"/>
<use href="#eyeoff" x="59" y="299" width="16" height="11"/><use href="#fld" x="84" y="297" width="16" height="14"/>
<use href="#eye" x="59" y="323" width="16" height="10"/><use href="#fld" x="84" y="321" width="16" height="14"/>
<use href="#eyeoff" x="59" y="347" width="16" height="11"/><use href="#fld" x="84" y="345" width="16" height="14"/>
<g font-size="11" fill="#3f3f46">
<text x="89" y="188" textLength="90" lengthAdjust="spacingAndGlyphs">Document Settings</text>
<text x="89" y="212" textLength="68" lengthAdjust="spacingAndGlyphs">Named Views</text>
<text x="114" y="236" textLength="28" lengthAdjust="spacingAndGlyphs">Origin</text>
<text x="114" y="260" textLength="42" lengthAdjust="spacingAndGlyphs">Analysis</text>
<text x="114" y="284" textLength="34" lengthAdjust="spacingAndGlyphs">Bodies</text>
<text x="114" y="308" textLength="49" lengthAdjust="spacingAndGlyphs">Canvases</text>
<text x="114" y="332" textLength="45" lengthAdjust="spacingAndGlyphs">Sketches</text>
<text x="114" y="356" textLength="61" lengthAdjust="spacingAndGlyphs">Construction</text>
</g>

<!-- comments -->
<rect x="2" y="1280" width="300" height="25" fill="#f1f1f1"/>
<text x="27" y="1296" font-size="11" fill="#555" textLength="57" lengthAdjust="spacingAndGlyphs">COMMENTS</text>
<circle cx="286" cy="1292" r="4.500" fill="#222"/><path d="M283 1292h6M286 1289v6" stroke="#eee" stroke-width="1.400"/>

<!-- nav bar -->
<rect x="960" y="1279" width="237" height="24" fill="#f1f1f1"/>
<g fill="none" stroke="#333" stroke-width="1.100">
<path d="M971 1285v15M966 1293c-3 1-3 4 1 5 4 1 9-1 9-3 0-1-1-2-3-3"/>
<rect x="997" y="1290" width="15" height="11"/><path d="M1001 1295h7M997 1290l3-5 3 3 4-4 1 6" />
<path d="M1026 1301c-3-3-4-6-4-8l3 2v-8l2 6v-8l2 8 1-7 2 8 1-5 1 8c0 2-2 4-3 4z"/>
<circle cx="1054" cy="1291" r="5.500"/><path d="M1058 1295l4 5M1061 1284h6M1064 1281v6"/>
<circle cx="1081" cy="1289" r="7"/><rect x="1078" y="1286" width="6" height="6"/><path d="M1086 1295l4 5" stroke-width="2"/>
</g>
<path d="M968 1285h6l-3-5z" fill="#333"/>
<rect x="1108" y="1282" width="14" height="12" fill="#a5bfe0" stroke="#444"/><path d="M1115 1294v3M1110 1298h10" stroke="#444" stroke-width="1.500"/>
<rect x="1139" y="1283" width="15" height="15" fill="#bbb" stroke="#555"/><path d="M1144 1283v15M1149 1283v15M1139 1288h15M1139 1293h15" stroke="#f1f1f1" stroke-width=".6"/>
<rect x="1170" y="1283" width="14" height="15" fill="#8fb0da" stroke="#2c4a7c"/><path d="M1177 1283v15M1170 1290.500h14" stroke="#f1f1f1"/>
<path d="M984 1289h6l-3 4zM1095 1289h6l-3 4zM1125 1289h6l-3 4zM1156 1289h6l-3 4zM1187 1289h6l-3 4z" fill="#333"/>

<!-- bottom timeline -->
<rect y="1309" width="2149" height="44" fill="#f1f1f1"/>
<rect x="0" y="1309" width="132" height="1" fill="#ddd"/>
<path d="M1897 1316a4 4 0 0 1 0-7H2149v7z" fill="#c9c9c9"/>
<g fill="#444">
<path d="M9 1332h2v12H9zM21 1332v12l-9-6z"/>
<path d="M33 1338l7-6v12zM42 1335h2v6h-2zM45 1333h2v10h-2z" opacity=".9"/>
<path d="M59 1331l12 7-12 7z"/>
<path d="M83 1335h2v6h-2zM86 1333h2v10h-2zM89 1332l7 6-7 6z"/>
<path d="M109 1332l9 6-9 6zM119 1332h2v12h-2z"/>
</g>
<path d="M135 1350h3v2h-3zM140 1350h3v2h-3z" fill="#bbb"/>
<rect x="146" y="1349" width="1952" height="3" fill="#cfcfcf"/>
<line x1="151.200" y1="1346.500" x2="2100" y2="1346.500" stroke="#bdbdbd" stroke-width="5" stroke-dasharray="1.500 22.530"/>
<g>
<use href="#O1" x="143.500" y="1324.500" width="17" height="17"/><use href="#O2" x="167.500" y="1324.500" width="17" height="17"/><use href="#O3" x="191.600" y="1324.500" width="17" height="17"/><use href="#P" x="215.600" y="1324.500" width="17" height="17"/><use href="#J" x="239.600" y="1324.500" width="17" height="17"/><use href="#G" x="263.700" y="1324.500" width="17" height="17"/><use href="#D" x="287.700" y="1324.500" width="17" height="17"/><use href="#C" x="311.700" y="1324.500" width="17" height="17"/><use href="#S" x="335.700" y="1324.500" width="17" height="17"/><use href="#P" x="359.800" y="1324.500" width="17" height="17"/>
<use href="#J" x="383.800" y="1324.500" width="17" height="17"/><use href="#E" x="407.800" y="1324.500" width="17" height="17"/><use href="#P" x="431.900" y="1324.500" width="17" height="17"/><use href="#S" x="455.900" y="1324.500" width="17" height="17"/><use href="#R" x="479.900" y="1324.500" width="17" height="17"/><use href="#K" x="504" y="1324.500" width="17" height="17"/><use href="#S" x="528" y="1324.500" width="17" height="17"/><use href="#S" x="552" y="1324.500" width="17" height="17"/><use href="#Y" x="576" y="1324.500" width="17" height="17"/><use href="#F" x="600.100" y="1324.500" width="17" height="17"/>
<use href="#B" x="624.100" y="1324.500" width="17" height="17"/><use href="#B" x="648.100" y="1324.500" width="17" height="17"/><use href="#D" x="672.200" y="1324.500" width="17" height="17"/><use href="#C" x="696.200" y="1324.500" width="17" height="17"/><use href="#C" x="720.200" y="1324.500" width="17" height="17"/><use href="#S" x="744.300" y="1324.500" width="17" height="17"/><use href="#S" x="768.300" y="1324.500" width="17" height="17"/><use href="#V" x="792.300" y="1324.500" width="17" height="17"/><use href="#S" x="816.300" y="1324.500" width="17" height="17"/><use href="#V" x="840.400" y="1324.500" width="17" height="17"/>
<use href="#S" x="864.400" y="1324.500" width="17" height="17"/><use href="#L" x="888.400" y="1324.500" width="17" height="17"/><use href="#HS" x="912.500" y="1324.500" width="17" height="17"/><use href="#HS" x="936.500" y="1324.500" width="17" height="17"/><use href="#HS" x="960.500" y="1324.500" width="17" height="17"/><use href="#D" x="984.600" y="1324.500" width="17" height="17"/><use href="#C" x="1008.600" y="1324.500" width="17" height="17"/><use href="#INS" x="1032.600" y="1324.500" width="17" height="17"/><use href="#K" x="1056.600" y="1324.500" width="17" height="17"/><use href="#N" x="1080.700" y="1324.500" width="17" height="17"/>
<use href="#S" x="1104.700" y="1324.500" width="17" height="17"/><use href="#S" x="1128.700" y="1324.500" width="17" height="17"/><use href="#Y" x="1152.800" y="1324.500" width="17" height="17"/><use href="#B" x="1176.800" y="1324.500" width="17" height="17"/><use href="#B" x="1200.800" y="1324.500" width="17" height="17"/><use href="#D" x="1224.900" y="1324.500" width="17" height="17"/><use href="#C" x="1248.900" y="1324.500" width="17" height="17"/><use href="#C" x="1272.900" y="1324.500" width="17" height="17"/><use href="#S" x="1296.900" y="1324.500" width="17" height="17"/><use href="#V" x="1321" y="1324.500" width="17" height="17"/>
<use href="#S" x="1345" y="1324.500" width="17" height="17"/><use href="#T" x="1369" y="1324.500" width="17" height="17"/><use href="#V" x="1393.100" y="1324.500" width="17" height="17"/><use href="#S" x="1417.100" y="1324.500" width="17" height="17"/><use href="#T" x="1441.100" y="1324.500" width="17" height="17"/><use href="#V" x="1465.200" y="1324.500" width="17" height="17"/><use href="#S" x="1489.200" y="1324.500" width="17" height="17"/><use href="#L" x="1513.200" y="1324.500" width="17" height="17"/><use href="#HS" x="1537.200" y="1324.500" width="17" height="17"/><use href="#HS" x="1561.300" y="1324.500" width="17" height="17"/>
<use href="#HS" x="1585.300" y="1324.500" width="17" height="17"/><use href="#D" x="1609.300" y="1324.500" width="17" height="17"/><use href="#C" x="1633.400" y="1324.500" width="17" height="17"/><use href="#C" x="1657.400" y="1324.500" width="17" height="17"/><use href="#W" x="1681.400" y="1324.500" width="17" height="17"/><use href="#M" x="1705.500" y="1324.500" width="17" height="17"/><use href="#M" x="1729.500" y="1324.500" width="17" height="17"/><use href="#C" x="1753.500" y="1324.500" width="17" height="17"/><use href="#A" x="1777.500" y="1324.500" width="17" height="17"/><use href="#E" x="1801.600" y="1324.500" width="17" height="17"/>
<use href="#S" x="1825.600" y="1324.500" width="17" height="17"/><use href="#R" x="1849.600" y="1324.500" width="17" height="17"/><use href="#S" x="1873.700" y="1324.500" width="17" height="17"/><use href="#R" x="1897.700" y="1324.500" width="17" height="17"/><use href="#J" x="1921.700" y="1324.500" width="17" height="17"/><use href="#S" x="1945.800" y="1324.500" width="17" height="17"/><use href="#P" x="1969.800" y="1324.500" width="17" height="17"/><use href="#E" x="1993.800" y="1324.500" width="17" height="17"/><use href="#J" x="2017.800" y="1324.500" width="17" height="17"/><use href="#W" x="2041.900" y="1324.500" width="17" height="17"/>
<use href="#M" x="2065.900" y="1324.500" width="17" height="17"/><use href="#A" x="2089.900" y="1324.500" width="17" height="17"/>
</g>
<path d="M2102 1319h12v6l-5 5v23h-2v-23l-5-5z" fill="#555"/>
<circle cx="2138" cy="1338" r="5" fill="none" stroke="#a4a4a4" stroke-width="4"/><circle cx="2138" cy="1338" r="8" fill="none" stroke="#a4a4a4" stroke-width="2.500" stroke-dasharray="3.500 2.800"/>
</svg>
</body></html>
